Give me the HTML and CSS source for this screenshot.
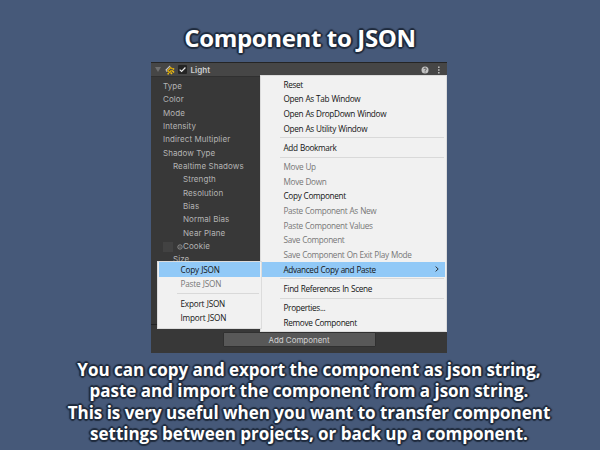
FILE: index.html
```html
<!DOCTYPE html>
<html lang="en">
<head>
<meta charset="utf-8">
<title>Component to JSON</title>
<link rel="stylesheet" href="styles.css">
</head>
<body>
<h1 class="title">Component to JSON</h1>
<main class="inspector">
  <header class="component-header">
    <svg class="fold" viewBox="0 0 6 5"><path d="M0 0h6L3 5z"/></svg>
    <svg class="light-icon" viewBox="0 0 10 10"><path d="M.8 5.2 5.2 .9M1 5.3 2.3 6.6" stroke="#c4c4c4" stroke-width="1.2"/><path d="M2.5 6 5.6 2.6 7 3.8M3 6.2 4.4 7.4 6.6 5.2" stroke="#dda900" stroke-width="1.3"/><path d="M3.2 8v1.6M5.6 7.4 7 9M7.2 5.5 9 7.4M7.4 3.3l1.8 1" stroke="#efbd14" stroke-width="1.5"/></svg>
    <span class="check"><svg viewBox="0 0 9 9"><path d="M1.7 4.6 3.6 6.5 7.4 2.5" fill="none" stroke="#eee" stroke-width="1.2"/></svg></span>
    <strong class="name">Light</strong>
    <svg class="help" viewBox="0 0 8 8"><circle cx="4" cy="4" r="3.5" fill="#c4c4c4"/><path d="M2.8 3.1c0-1.5 2.5-1.5 2.5 0 0 .8-1.2.8-1.2 1.7M4.1 5.6v.8" fill="none" stroke="#444" stroke-width=".9"/></svg>
    <svg class="dots" viewBox="0 0 2 8"><path d="M0 .5h1.6v1.6H0zM0 3.2h1.6v1.6H0zM0 5.9h1.6v1.6H0z" fill="#bbb"/></svg>
  </header>
  <ul class="properties">
    <li>Type</li><li>Color</li><li>Mode</li><li>Intensity</li><li>Indirect Multiplier</li><li>Shadow Type</li>
    <li class="in1">Realtime Shadows</li>
    <li class="in2">Strength</li><li class="in2">Resolution</li><li class="in2">Bias</li><li class="in2">Normal Bias</li><li class="in2">Near Plane</li>
    <li class="cookie"><span class="swatch"></span><svg viewBox="0 0 6 6"><circle cx="3" cy="3" r="2.2" fill="none" stroke="#aaa" stroke-width=".7"/><circle cx="3" cy="3" r=".6" fill="#bbb"/></svg>Cookie</li>
    <li class="in1">Size</li>
  </ul>
  <footer class="panel-footer"><button class="add">Add Component</button></footer>
  <div class="menu context">
    <div class="item">Reset</div>
    <div class="item">Open As Tab Window</div>
    <div class="item">Open As DropDown Window</div>
    <div class="item">Open As Utility Window</div>
    <hr>
    <div class="item">Add Bookmark</div>
    <hr>
    <div class="item off">Move Up</div>
    <div class="item off">Move Down</div>
    <div class="item">Copy Component</div>
    <div class="item off">Paste Component As New</div>
    <div class="item off">Paste Component Values</div>
    <div class="item off">Save Component</div>
    <div class="item off">Save Component On Exit Play Mode</div>
    <div class="item active">Advanced Copy and Paste<svg class="arrow" viewBox="0 0 4 6"><path d="M.6.6 3.2 3 .6 5.4" fill="none" stroke="#222" stroke-width=".9"/></svg></div>
    <hr>
    <div class="item">Find References In Scene</div>
    <hr>
    <div class="item">Properties...</div>
    <div class="item">Remove Component</div>
  </div>
  <div class="menu submenu">
    <div class="item active">Copy JSON</div>
    <div class="item off">Paste JSON</div>
    <hr>
    <div class="item">Export JSON</div>
    <div class="item">Import JSON</div>
  </div>
</main>
<p class="caption">You can copy and export the component as json string,<br>paste and import the component from a json string.<br>This is very useful when you want to transfer component<br>settings between projects, or back up a component.</p>
</body>
</html>
```

FILE: styles.css
```css
* { box-sizing: border-box; }
body {
  margin: 0;
  width: 600px;
  height: 450px;
  overflow: hidden;
  background: #465979;
  font-family: "Open Sans", "Noto Sans", sans-serif;
}
svg { display: block; flex: none; fill: none; }
.title, .caption {
  color: #fff;
  text-align: center;
  white-space: nowrap;
  text-shadow: 2px 0 1px #202c3e, -2px 0 1px #202c3e, 0 2px 1px #202c3e, 0 -2px 1px #202c3e,
    1px 1px 1px #202c3e, -1px 1px 1px #202c3e, 1px -1px 1px #202c3e, -1px -1px 1px #202c3e;
}
.title {
  margin: 0;
  height: 62px;
  padding-top: 22px;
  font-size: 24px;
  line-height: 32px;
  font-weight: 700;
  letter-spacing: -.36px;
}
.inspector {
  position: relative;
  width: 296px;
  height: 291px;
  margin-left: 151px;
  background: #383838;
  color: #b4b4b4;
  font-family: Inter, sans-serif;
  font-size: 8px;
}
.component-header {
  display: flex;
  align-items: center;
  height: 15px;
  padding: 0 5px 0 4px;
  background: #464646;
  border-top: 1px solid #252525;
  border-bottom: 1px solid #303030;
}
.fold { width: 6px; height: 5px; fill: #6e6e6e; }
.light-icon { width: 10px; height: 10px; margin-left: 3.5px; }
.check { width: 9px; height: 9px; margin-left: 3px; background: #242424; border-radius: 1px; }
.name { margin-left: 4px; font-size: 8.1px; font-weight: 600; color: #cecece; }
.help { width: 8px; height: 8px; margin-left: auto; }
.dots { width: 2px; height: 8px; margin: 0 2px 0 9px; }
.properties { list-style: none; margin: 0; padding: 3px 0 0 12px; height: 247px; overflow: hidden; letter-spacing: .08px; }
.properties li { height: 13.33px; line-height: 13.33px; }
.properties .in1 { padding-left: 10px; }
.properties .in2 { padding-left: 20px; }
.properties .cookie { display: flex; align-items: center; }
.swatch { width: 10px; height: 10px; margin-right: 4px; background: #424242; }
.cookie svg { width: 6px; height: 6px; }
.panel-footer { display: flex; justify-content: center; height: 29px; padding-top: 7px; border-top: 1px solid #242424; }
.add {
  width: 153px;
  height: 15px;
  padding: 0;
  border: 1px solid #303030;
  border-radius: 1px;
  background: #585858;
  color: #d2d2d2;
  font: 8px/12px Inter, sans-serif;
  letter-spacing: -.05px;
}
.menu {
  position: absolute;
  background: #f1f1f1;
  border: 1px solid #dcdcdc;
  color: #141414;
  font-family: "Open Sans", sans-serif;
  font-size: 8.2px;
  font-weight: 500;
  letter-spacing: -.32px;
  word-spacing: .4px;
  white-space: nowrap;
}
.context { left: 109px; top: 13px; width: 187px; height: 257px; padding: .8px 1px; }
.submenu { left: 6px; top: 198.6px; width: 105px; height: 68.4px; padding: .3px 1px; letter-spacing: -.2px; }
.item { display: flex; align-items: center; justify-content: space-between; height: 14.65px; padding: 0 6px 0 21.5px; }
.off { color: #777; font-weight: 400; }
.active { background: #91c9f7; }
.arrow { width: 4px; height: 6px; }
.menu hr { height: 1px; margin: 1.85px 1px 1.85px 18px; border: 0; background: #d9d9d9; }
.caption { margin: 5.5px 0 0; padding-left: 18px; font-size: 17px; line-height: 21.6px; font-weight: 700; letter-spacing: -.02px; }
```
